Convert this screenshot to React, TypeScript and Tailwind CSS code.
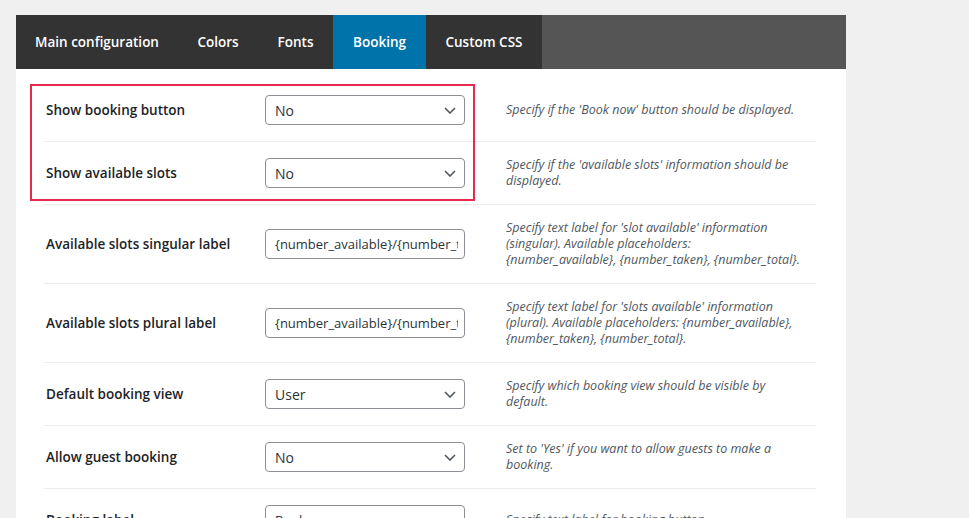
import React from "react";

type Row = {
  label: string;
  kind: "select" | "input";
  value: string;
  desc: string[];
};

const rows: Row[] = [
  { label: "Show booking button", kind: "select", value: "No", desc: ["Specify if the 'Book now' button should be displayed."] },
  { label: "Show available slots", kind: "select", value: "No", desc: ["Specify if the 'available slots' information should be", "displayed."] },
  {
    label: "Available slots singular label",
    kind: "input",
    value: "{number_available}/{number_total}",
    desc: ["Specify text label for 'slot available' information", "(singular). Available placeholders:", "{number_available}, {number_taken}, {number_total}."],
  },
  {
    label: "Available slots plural label",
    kind: "input",
    value: "{number_available}/{number_total}",
    desc: ["Specify text label for 'slots available' information", "(plural). Available placeholders: {number_available},", "{number_taken}, {number_total}."],
  },
  { label: "Default booking view", kind: "select", value: "User", desc: ["Specify which booking view should be visible by", "default."] },
  { label: "Allow guest booking", kind: "select", value: "No", desc: ["Set to 'Yes' if you want to allow guests to make a", "booking."] },
  { label: "Booking label", kind: "input", value: "Book now", desc: ["Specify text label for booking button."] },
  { label: "Booking button color", kind: "select", value: "Default", desc: ["Specify the booking button color."] },
];

const tabs = [
  { name: "Main configuration", w: "w-[162px]", active: false },
  { name: "Colors", w: "w-[80px]", active: false },
  { name: "Fonts", w: "w-[75px]", active: false },
  { name: "Booking", w: "w-[93px]", active: true },
  { name: "Custom CSS", w: "w-[116px]", active: false },
];

function Chevron() {
  return (
    <svg width="12" height="7" viewBox="0 0 12 7" className="shrink-0">
      <polyline points="1,1 6,6 11,1" fill="none" stroke="#50575e" strokeWidth="1.6" />
    </svg>
  );
}

function Control({ row }: { row: Row }) {
  if (row.kind === "select") {
    return (
      <div className="w-[200px] h-[30px] border border-[#8c8f94] rounded-[4px] bg-white flex items-center justify-between pl-[9px] pr-[8px] text-[14px] text-[#2c3338]">
        <span>{row.value}</span>
        <Chevron />
      </div>
    );
  }
  return (
    <input
      readOnly
      value={row.value}
      className="w-[200px] h-[30px] border border-[#8c8f94] rounded-[4px] bg-white pl-[9px] pr-[6px] text-[13px] text-[#2c3338] outline-none"
      style={{ fontFamily: "inherit" }}
    />
  );
}

export default function App() {
  return (
    <div className="min-h-screen bg-[#f0f0f0] pt-[15px] pl-[16px] overflow-hidden" style={{ fontFamily: "'Open Sans', 'Noto Sans', sans-serif" }}>
      <div className="w-[830px] bg-white">
        <div className="flex h-[54px] bg-[#555555]">
          {tabs.map((t) => (
            <div
              key={t.name}
              className={`${t.w} h-full flex items-center justify-center text-[13.5px] font-semibold text-white ${t.active ? "bg-[#0073aa]" : "bg-[#333333]"}`}
            >
              {t.name}
            </div>
          ))}
        </div>
        <div className="relative pt-[10px] pl-[28px] pr-[30px]">
          <div className="absolute left-[14px] top-[15px] w-[445px] h-[117px] border-2 border-[#e8294f] pointer-events-none" />
          {rows.map((r) => (
            <div key={r.label} className="flex items-center py-[15px] border-b border-[#ececec]">
              <div className="w-[221px] shrink-0 pl-[2px] text-[13.5px] font-semibold text-[#1d2327]">{r.label}</div>
              <div className="w-[241px] shrink-0 h-8 flex items-center">
                <Control row={r} />
              </div>
              <div className="flex-1 text-[12.5px] leading-[16px] italic text-[#50575e]">
                {r.desc.map((d, i) => (
                  <div key={i} className="whitespace-nowrap">
                    {d}
                  </div>
                ))}
              </div>
            </div>
          ))}
        </div>
      </div>
    </div>
  );
}
